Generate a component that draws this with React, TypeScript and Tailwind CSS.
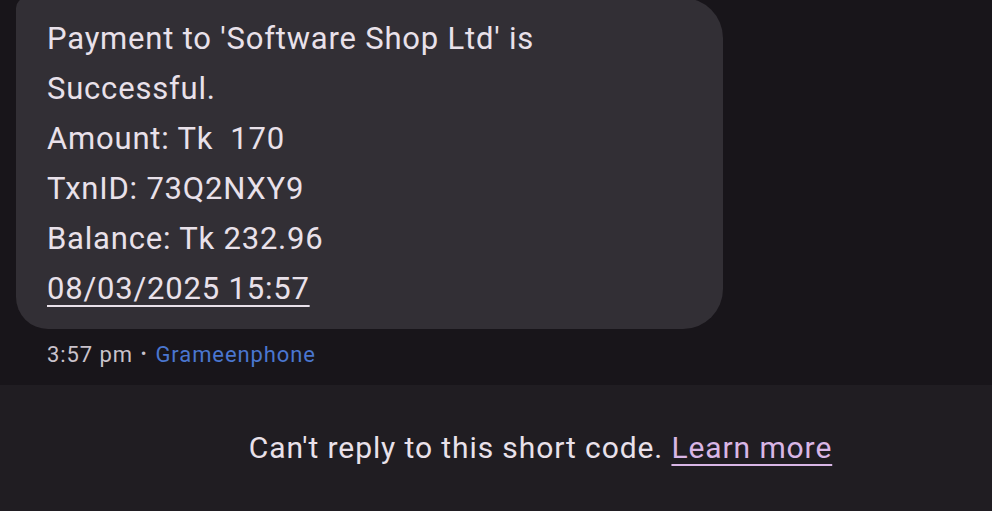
import React from "react";

const lines = [
  "Payment to 'Software Shop Ltd' is",
  "Successful.",
  "Amount: Tk  170",
  "TxnID: 73Q2NXY9",
  "Balance: Tk 232.96",
];

export default function App() {
  return (
    <div
      className="flex h-[511px] w-[992px] flex-col overflow-hidden bg-[#18151a]"
      style={{ fontFamily: "Roboto, 'Noto Sans', sans-serif" }}
    >
      <div className="ml-4 mt-[-2px] w-[707px] rounded-tl-[10px] rounded-tr-[40px] rounded-br-[40px] rounded-bl-[32px] bg-[#322f35] pl-[31px] pt-[16px] pb-[15px] text-[31px] leading-[50px] tracking-[0.8px] text-[#e9e1ea]">
        {lines.map((l, i) => (
          <div key={i} className="whitespace-pre">
            {l}
          </div>
        ))}
        <div>
          <span className="underline decoration-2 underline-offset-[6px]">08/03/2025 15:57</span>
        </div>
      </div>
      <div className="flex h-[56px] items-center pl-[47px] pb-[6px] text-[22px] tracking-[0.9px] text-[#c9c2cb]">
        <span>3:57 pm</span>
        <span className="mx-[8px] text-[17px]">•</span>
        <span className="text-[#4a76cf]">Grameenphone</span>
      </div>
      <div className="flex flex-1 items-center justify-center bg-[#201d22] pb-[2px] pl-[89px] text-[30px] tracking-[0.9px] text-[#e9e1ea]">
        <span>Can't reply to this short code.&nbsp;</span>
        <span className="text-[#d9b6e6] underline decoration-2 underline-offset-[6px]">Learn more</span>
      </div>
    </div>
  );
}
